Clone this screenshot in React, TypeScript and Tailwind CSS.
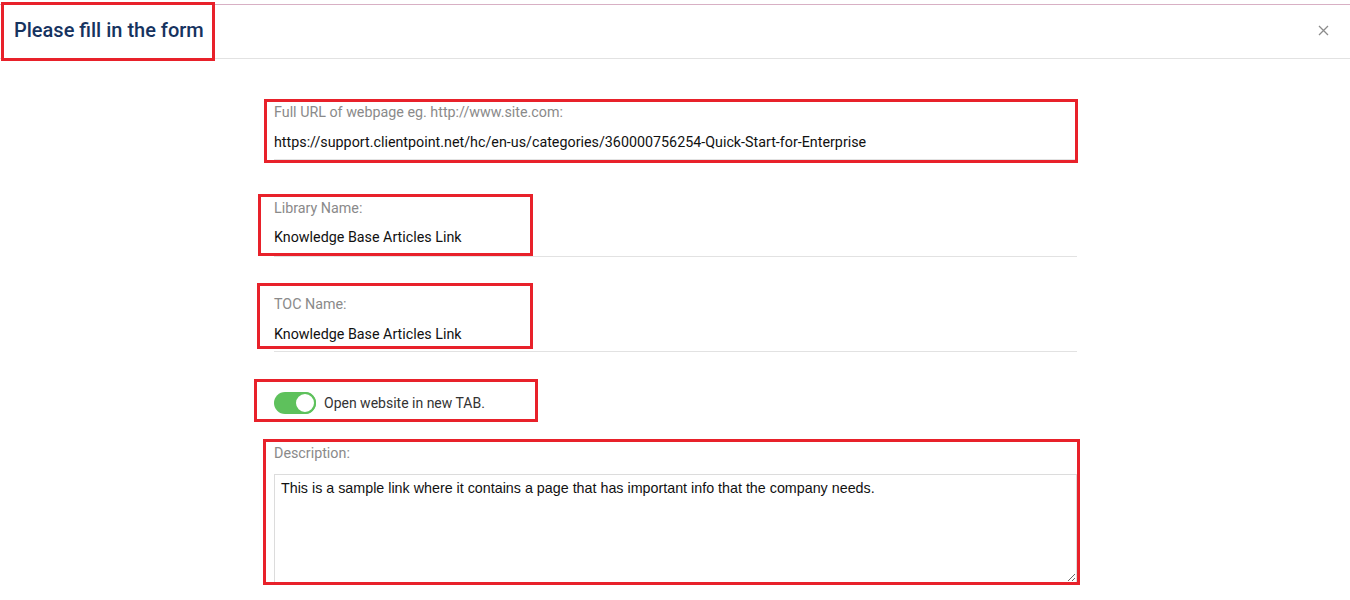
import React from "react";

export default function App() {
  const red = "border-[3px] border-[#e8212a]";
  return (
    <div className="relative w-[1350px] h-[600px] bg-white overflow-hidden font-['Roboto',_'Liberation_Sans',_sans-serif]">
      {/* Header */}
      <div className="mt-[4px] border-t border-[#d8b0c4]">
        <div className="h-[54px] border-b border-[#e2e2e2] flex items-center justify-between pl-[14px] pr-[21px]">
          <h1 className="text-[20px] leading-[24px] font-medium text-[#16335f] mt-[-3px]">Please fill in the form</h1>
          <button className="w-[12px] h-[12px] flex items-center justify-center mt-[-2px]">
            <svg width="11" height="11" viewBox="0 0 11 11" fill="none">
              <path d="M1 1L10 10M10 1L1 10" stroke="#8c8c8c" strokeWidth="1.3" />
            </svg>
          </button>
        </div>
      </div>

      {/* Form */}
      <div className="ml-[274px] w-[803px] text-[14.3px]">
        {/* URL */}
        <div className="pt-[43px]">
          <div className="h-[20px] leading-[20px] text-[#8a8a8a]">Full URL of webpage eg. http://www.site.com:</div>
          <div className="mt-[10px] h-[20px] leading-[20px] text-[#111]">
            https://support.clientpoint.net/hc/en-us/categories/360000756254-Quick-Start-for-Enterprise
          </div>
          <div className="mt-[7px] border-b border-[#e2e2e2]" />
        </div>

        {/* Library */}
        <div className="pt-[38px]">
          <div className="h-[20px] leading-[20px] text-[#8a8a8a]">Library Name:</div>
          <div className="mt-[9px] h-[20px] leading-[20px] text-[#111]">Knowledge Base Articles Link</div>
          <div className="mt-[9px] border-b border-[#e2e2e2]" />
        </div>

        {/* TOC */}
        <div className="pt-[37px]">
          <div className="h-[20px] leading-[20px] text-[#8a8a8a]">TOC Name:</div>
          <div className="mt-[10px] h-[20px] leading-[20px] text-[#111]">Knowledge Base Articles Link</div>
          <div className="mt-[7px] border-b border-[#e2e2e2]" />
        </div>

        {/* Toggle */}
        <div className="pt-[40px]">
          <div className="flex items-center h-[22px]">
            <div className="relative w-[42px] h-[22px] rounded-full bg-[#5ec15c]">
              <div className="absolute right-0 top-0 w-[22px] h-[22px] rounded-full bg-white border-[2px] border-[#5ec15c]" />
            </div>
            <span className="ml-[8px] text-[14px] text-[#333]">Open website in new TAB.</span>
          </div>
        </div>

        {/* Description */}
        <div className="pt-[29px]">
          <div className="h-[20px] leading-[20px] text-[#8a8a8a]">Description:</div>
          <textarea
            className="block mt-[11px] w-[803px] h-[109px] border border-[#dcdcdc] px-[6px] py-[5px] text-[14.3px] leading-[17px] text-[#111] font-['Liberation_Sans',_Arial,_sans-serif] outline-none"
            defaultValue="This is a sample link where it contains a page that has important info that the company needs."
          />
        </div>
      </div>

      {/* Annotation boxes */}
      <div className={`absolute left-[1px] top-[2px] w-[214px] h-[59px] ${red} pointer-events-none`} />
      <div className={`absolute left-[264px] top-[99px] w-[814px] h-[64px] ${red} pointer-events-none`} />
      <div className={`absolute left-[258px] top-[194px] w-[275px] h-[62px] ${red} pointer-events-none`} />
      <div className={`absolute left-[257px] top-[283px] w-[276px] h-[66px] ${red} pointer-events-none`} />
      <div className={`absolute left-[254px] top-[379px] w-[284px] h-[43px] ${red} pointer-events-none`} />
      <div className={`absolute left-[263px] top-[439px] w-[817px] h-[146px] ${red} pointer-events-none`} />
    </div>
  );
}
